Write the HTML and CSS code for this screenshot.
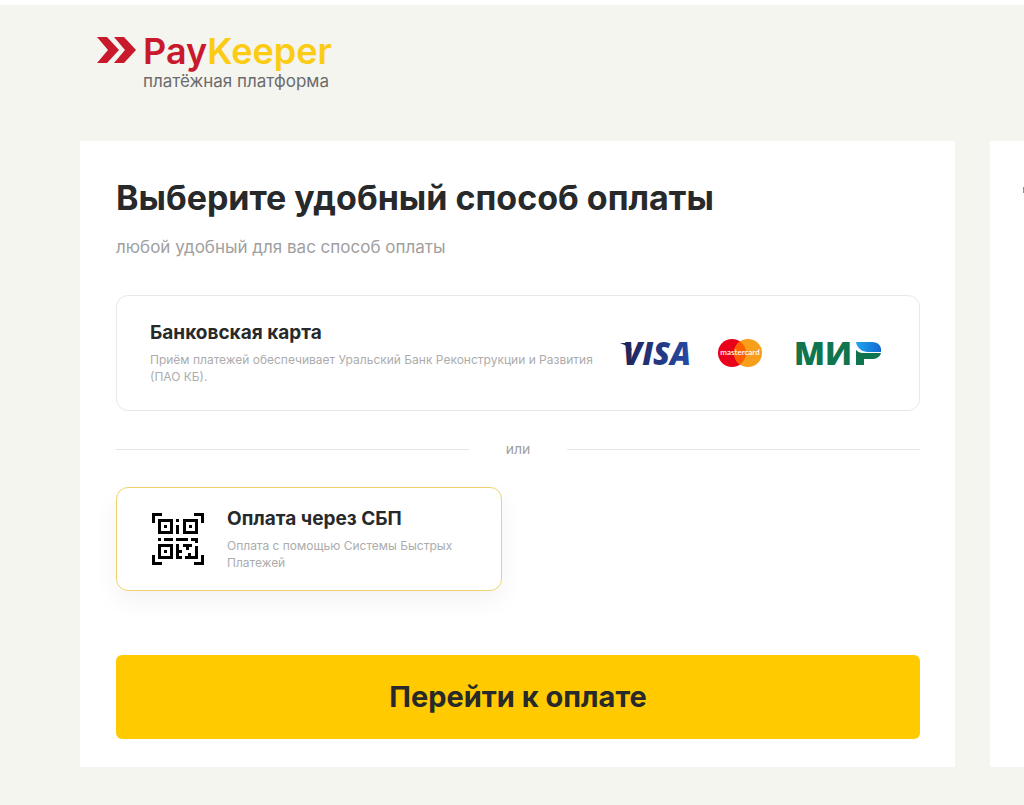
FILE: index.html
```html
<!DOCTYPE html>
<html lang="ru">
<head>
  <meta charset="UTF-8" />
  <meta name="viewport" content="width=device-width, initial-scale=1" />
  <title>PayKeeper</title>
  <link rel="stylesheet" href="styles.css">
</head>
<body>

  <header class="header">
    <a class="logo" href="#">
      <svg class="logo-mark" viewBox="0 0 40 28" aria-hidden="true">
        <path d="M0 1h10l12 13-12 13H0l11-13z" fill="#c8192d"/>
        <path d="M17 1h10l12 13-12 13H17l11-13z" fill="#c8192d"/>
      </svg>
      <span class="logo-text">
        <span class="logo-name">Pay<span class="logo-accent">Keeper</span></span>
        <span class="logo-sub">платёжная платформа</span>
      </span>
    </a>
  </header>

  <div class="content">
    <main class="panel">
      <h1 class="title">Выберите удобный способ оплаты</h1>
      <p class="subtitle">любой удобный для вас способ оплаты</p>

      <form class="form" action="#">
        <label class="method method-card">
          <input class="method-radio" type="radio" name="method" value="card">
          <span class="method-body">
            <span class="method-name">Банковская карта</span>
            <span class="method-text">Приём платежей обеспечивает Уральский Банк Реконструкции и Развития (ПАО КБ).</span>
          </span>
          <span class="brands">
            <svg class="brand-visa" viewBox="0 -9 72 48" aria-hidden="true">
              <defs>
                <linearGradient id="visa" x1="0" x2="1" y1="0" y2="0">
                  <stop offset="0" stop-color="#222357"/>
                  <stop offset="1" stop-color="#254aa5"/>
                </linearGradient>
              </defs>
              <path d="M1 5h10l2 8C10 9 6 7 1 5z" fill="#222357"/>
              <text class="visa-word" x="4" y="27" fill="url(#visa)">VISA</text>
            </svg>
            <svg class="brand-mc" viewBox="0 0 46 30" aria-hidden="true">
              <circle cx="15" cy="15" r="14" fill="#eb001b"/>
              <circle cx="31" cy="15" r="14" fill="#f79e1b"/>
              <path d="M23 3.500a14 14 0 0 1 0 23a14 14 0 0 1 0-23z" fill="#ff5f00"/>
              <text class="mc-word" x="23" y="17" text-anchor="middle" fill="#fff">mastercard</text>
            </svg>
            <svg class="brand-mir" viewBox="-6 -9 94 48" aria-hidden="true">
              <defs>
                <linearGradient id="mir" x1="0" x2="1" y1="0" y2="0">
                  <stop offset="0" stop-color="#1fa5ee"/>
                  <stop offset="1" stop-color="#1468d0"/>
                </linearGradient>
              </defs>
              <text class="mir-word" x="-1" y="27" fill="#0f754e">МИР</text>
              <path d="M57 3h29v25H57z" fill="#fff"/>
              <path d="M61 12c3 3 6 3 9 3h16c-1 4-5 6-9 6h-8v6h-8z" fill="#0f754e"/>
              <path d="M61 4h16c6 0 10 4 9 10H73c-6 0-11-4-12-10z" fill="url(#mir)"/>
            </svg>
          </span>
        </label>

        <div class="divider">или</div>

        <label class="method method-sbp">
          <input class="method-radio" type="radio" name="method" value="sbp" checked>
          <svg class="qr" viewBox="0 0 54 54" aria-hidden="true">
            <g fill="none" stroke="#000" stroke-width="3">
              <path d="M2.500 11V2.500H11M43 2.500h8.500V11M2.500 43v8.500H11M43 51.500h8.500V43"/>
              <path d="M8.500 8.500h12v12h-12zM33.500 8.500h12v12h-12zM8.500 33.500h12v12h-12z"/>
            </g>
            <path d="M13 13h3v3h-3zM38 13h3v3h-3zM13 38h3v3h-3zM25 7h3v3h-3zM25 13h3v9h-3zM7 26h3v3H7zM13 26h9v3h-9zM25 26h12v3H25zM40 26h7v5h-3v-2h-4zM25 32h3v6h3v3h-3v3h3v3h-6zM32 32h9v3h-3v3h-3v-3h-3zM44 34h3v13H34v-3h3v-3h3v3h4z"/>
          </svg>
          <span class="method-body">
            <span class="method-name">Оплата через СБП</span>
            <span class="method-text">Оплата с помощью Системы Быстрых Платежей</span>
          </span>
        </label>

        <button class="submit" type="submit">Перейти к оплате</button>
      </form>
    </main>

    <aside class="panel-side">
      <div class="side-mark"></div>
    </aside>
  </div>

</body>
</html>
```
FILE: styles.css
```css
* {
  box-sizing: border-box;
}
body {
  margin: 0;
  min-height: 100vh;
  border-top: 5px solid #fff;
  background: #f4f5ef;
  color: #27292a;
  font-family: Inter, "Noto Sans", sans-serif;
  overflow-x: hidden;
}
.header {
  padding: 28px 97px 48px;
}
.logo {
  display: inline-flex;
  gap: 6px;
  text-decoration: none;
}
.logo-mark {
  width: 40px;
  height: 28px;
  margin-top: 3px;
}
.logo-text {
  display: flex;
  flex-direction: column;
}
.logo-name {
  color: #c8192d;
  font-size: 36px;
  font-weight: 600;
  line-height: 36px;
}
.logo-accent {
  color: #fccb14;
}
.logo-sub {
  color: #6b6b6b;
  font-size: 17px;
  line-height: 24px;
}
.content {
  display: flex;
  gap: 35px;
  padding-left: 80px;
  overflow: hidden;
}
.panel {
  flex: 1;
  min-width: 0;
  padding: 35px 35px 28px 36px;
  background: #fff;
}
.panel-side {
  flex: 0 0 400px;
  margin-right: -366px;
  padding: 46px 33px;
  background: #fff;
}
.side-mark {
  height: 6px;
  border-left: 1px solid #a08c80;
}
.title {
  margin: 0;
  font-size: 34px;
  font-weight: 700;
  line-height: 44px;
}
.subtitle {
  margin: 15px 0 36px;
  color: #a0a0a0;
  font-size: 17px;
  line-height: 24px;
}
.form {
  display: flex;
  flex-direction: column;
}
.method {
  display: flex;
  align-items: center;
  border: 1px solid #e8e8e8;
  border-radius: 12px;
  cursor: pointer;
}
.method:has(:checked) {
  border-color: #efd36a;
  box-shadow: 0 10px 24px rgba(0, 0, 0, 0.05);
}
.method-radio {
  position: absolute;
  opacity: 0;
}
.method-body {
  display: flex;
  flex: 1;
  flex-direction: column;
  gap: 6px;
}
.method-name {
  font-size: 19px;
  font-weight: 700;
  line-height: 24px;
}
.method-text {
  color: #acacac;
  font-size: 12px;
  line-height: 17px;
}
.method-card {
  gap: 12px;
  min-height: 116px;
  padding: 24px 36px 24px 33px;
}
.brands {
  display: flex;
  align-items: center;
  gap: 26px;
}
.brand-visa {
  width: 72px;
  height: 48px;
}
.brand-mc {
  width: 46px;
  height: 30px;
}
.brand-mir {
  width: 94px;
  height: 48px;
}
.visa-word {
  font: italic 800 31px "Open Sans", sans-serif;
}
.mc-word {
  font: 600 8px Lato, sans-serif;
}
.mir-word {
  font: 800 32px "Open Sans", sans-serif;
}
.divider {
  display: flex;
  align-items: center;
  gap: 37px;
  margin: 26px 0;
  color: #a0a0a0;
  font-size: 14px;
  line-height: 24px;
}
.divider::before,
.divider::after {
  content: "";
  flex: 1;
  border-top: 1px solid #e5e5e5;
}
.method-sbp {
  gap: 22px;
  width: 48%;
  min-height: 104px;
  padding: 19px 32px 19px 34px;
}
.qr {
  flex: none;
  width: 54px;
  height: 54px;
}
.submit {
  margin-top: 64px;
  padding: 20px;
  border: none;
  border-radius: 6px;
  background: #ffcb00;
  color: #27292a;
  font-family: inherit;
  font-size: 29px;
  font-weight: 700;
  line-height: 44px;
  cursor: pointer;
}
```
